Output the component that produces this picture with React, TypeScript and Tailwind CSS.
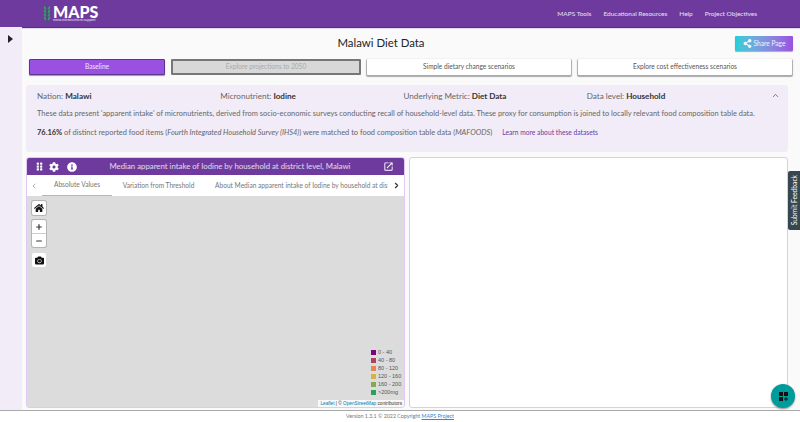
import { ChevronLeft, ChevronRight, ChevronUp, Minus, Plus } from "lucide-react";
import { FaCamera, FaCog, FaGripVertical, FaHome, FaInfoCircle, FaShareAlt } from "react-icons/fa";
import { MdOpenInNew } from "react-icons/md";

const font = "font-['Lato','Noto_Sans',sans-serif]";
const navLinks = ["MAPS Tools", "Educational Resources", "Help", "Project Objectives"];
const legend = [
  { label: "0 - 40", color: "bg-[#800080]" },
  { label: "40 - 80", color: "bg-[#b04060]" },
  { label: "80 - 120", color: "bg-[#e08850]" },
  { label: "120 - 160", color: "bg-[#d8b048]" },
  { label: "160 - 200", color: "bg-[#88a850]" },
  { label: ">200mg", color: "bg-[#28a060]" },
];

const Logo = () => (
  <div className="ml-[43px] flex items-center gap-[2px]">
    <svg width="8" height="18" viewBox="0 0 8 18">
      <path d="M4 0.5v17" stroke="#1f6f48" strokeWidth="0.8" />
      {[3, 6.5, 10, 13.5].map((y) => (
        <g key={y} fill="#3a9a68">
          <ellipse cx="2" cy={y} rx="0.9" ry="1.9" transform={`rotate(-30 2 ${y})`} />
          <ellipse cx="6" cy={y} rx="0.9" ry="1.9" transform={`rotate(30 6 ${y})`} />
        </g>
      ))}
    </svg>
    <div className="flex flex-col items-start">
      <span className="text-[16px] leading-[13px] font-black text-white">MAPS</span>
      <span className="text-[3.5px] leading-[4px] text-white/80">www.micronutrient.support</span>
    </div>
  </div>
);

const MapPanel = () => (
  <div className="relative flex-1 bg-[#dcdcdc]">
    <div className="absolute left-[5px] top-[5px] flex h-[14px] w-[14px] items-center justify-center rounded-[2px] bg-white shadow-[0_0_0_1px_#b5b5b5]">
      <FaHome size={10} color="#111" />
    </div>
    <div className="absolute left-[5px] top-[24px] flex w-[14px] flex-col rounded-[2px] bg-white shadow-[0_0_0_1px_#b5b5b5]">
      <div className="flex h-[14px] items-center justify-center border-b border-[#ccc]">
        <Plus size={8} strokeWidth={3.5} />
      </div>
      <div className="flex h-[13px] items-center justify-center">
        <Minus size={8} strokeWidth={3.5} />
      </div>
    </div>
    <div className="absolute left-[5px] top-[57px] flex h-[14px] w-[14px] items-center justify-center rounded-[2px] bg-white">
      <FaCamera size={9} color="#111" />
    </div>
    <div className="absolute bottom-[12px] right-[4px] flex w-[29px] flex-col gap-[2px] font-['Liberation_Sans',sans-serif] text-[5.5px] leading-[6px] text-[#555]">
      {legend.map((l) => (
        <div key={l.label} className="flex items-center gap-[2px] whitespace-nowrap">
          <span className={`h-[5px] w-[5px] shrink-0 ${l.color}`} />
          {l.label}
        </div>
      ))}
    </div>
    <div className="absolute bottom-0 right-0 bg-white/80 px-[2px] font-['Liberation_Sans',sans-serif] text-[4.7px] leading-[7px] text-[#333]">
      <span className="text-[#0078a8]">Leaflet</span> | © <span className="text-[#0078a8]">OpenStreetMap</span> contributors
    </div>
  </div>
);

const MapCard = () => (
  <div className="flex w-[379px] flex-col overflow-hidden rounded-[3px] border border-[#e0c8f4] bg-white">
    <div className="flex h-[17px] shrink-0 items-center bg-[#6e3a9e] pl-[8px] pr-[10px] text-white">
      <FaGripVertical size={9} />
      <FaCog size={10} className="ml-[5px]" />
      <FaInfoCircle size={10} className="ml-[8px]" />
      <span className="flex-1 whitespace-nowrap text-center text-[7.8px] text-white/80">Median apparent intake of Iodine by household at district level, Malawi</span>
      <MdOpenInNew size={11} />
    </div>
    <div className="flex h-[21px] shrink-0 items-center text-[6.6px] text-[#777]">
      <ChevronLeft size={8} className="ml-[3px] text-[#888]" />
      <div className="ml-[4px] flex h-full w-[70px] items-center justify-center border-b border-[#c8a8e0]">Absolute Values</div>
      <div className="flex h-full w-[93px] items-center justify-center whitespace-nowrap">Variation from Threshold</div>
      <div className="flex h-full w-[183px] items-center overflow-hidden whitespace-nowrap pl-[10px]">About Median apparent intake of Iodine by household at district level, Malawi</div>
      <ChevronRight size={9} strokeWidth={3} className="ml-[4px] text-[#333]" />
    </div>
    <MapPanel />
  </div>
);

export default function App() {
  return (
    <div className={`${font} relative flex h-[422px] w-[800px] flex-col overflow-hidden bg-[#fafafa] text-[#333]`}>
      <header className="flex h-[27px] shrink-0 items-center justify-between bg-[#6e3a9e] pr-[43px] shadow-[0_1px_1px_#5a3085]">
        <Logo />
        <nav className="flex gap-[12px] text-[6.5px] text-white/85">
          {navLinks.map((link) => (
            <span key={link}>{link}</span>
          ))}
        </nav>
      </header>

      <div className="flex min-h-0 flex-1">
        <aside className="w-[22px] shrink-0 bg-[#f1ecf8] pl-[8px] pt-[8px]">
          <div className="h-0 w-0 border-y-[4px] border-l-[5px] border-y-transparent border-l-[#222]" />
        </aside>

        <main className="flex w-[778px] flex-col pl-[4px]">
          <div className="relative flex h-[32px] shrink-0 items-center justify-center pr-[64px]">
            <h1 className="text-[11.4px] text-[#222]">Malawi Diet Data</h1>
            <button className="absolute right-[7px] top-[9px] flex h-[15px] w-[58px] items-center justify-center gap-[2px] rounded-[1px] bg-gradient-to-r from-[#12d0d8] to-[#9a50e0] text-[6.6px] text-white/90 shadow-[0_1px_1px_#aaa]">
              <FaShareAlt size={9} />
              Share Page
            </button>
          </div>

          <div className="flex h-[16px] shrink-0 gap-[6px] pl-[3px] text-[6.6px]">
            <div className="flex w-[136px] items-center justify-center rounded-[1px] border border-[#5c3490] bg-[#9a50e0] text-white/85 shadow-[0_1px_1px_#999]">Baseline</div>
            <div className="flex w-[190px] items-center justify-center rounded-[1px] border-2 border-[#777] bg-[#d8d8d8] text-[#aaa]">Explore projections to 2050</div>
            <div className="flex w-[204px] items-center justify-center rounded-[1px] bg-white text-[#555] shadow-[0_1px_1px_1px_#aaa]">Simple dietary change scenarios</div>
            <div className="ml-[1px] flex w-[214px] items-center justify-center rounded-[1px] bg-white text-[#555] shadow-[0_1px_1px_1px_#aaa]">Explore cost effectiveness scenarios</div>
          </div>

          <section className="relative mt-[10px] h-[67px] w-[762px] shrink-0 rounded-[3px] bg-[#f1ecf8] pl-[11px] pt-[6px] text-[7.45px] leading-[10px] text-[#666]">
            <div className="grid w-[733px] grid-cols-4 text-[8.1px] leading-[11px]">
              <span>Nation: <b className="text-[#333]">Malawi</b></span>
              <span>Micronutrient: <b className="text-[#333]">Iodine</b></span>
              <span>Underlying Metric: <b className="text-[#333]">Diet Data</b></span>
              <span>Data level: <b className="text-[#333]">Household</b></span>
            </div>
            <p className="mt-[7px] whitespace-nowrap">These data present 'apparent intake' of micronutrients, derived from socio-economic surveys conducting recall of household-level data. These proxy for consumption is joined to locally relevant food composition table data.</p>
            <p className="mt-[8px] whitespace-nowrap">
              <b className="text-[#333]">76.16%</b> of distinct reported food items (<i>Fourth Integrated Household Survey (IHS4)</i>) were matched to food composition table data (<i>MAFOODS</i>)
              <span className="ml-[10px] text-[6.7px] text-[#6e3a9e]">Learn more about these datasets</span>
            </p>
            <ChevronUp size={9} strokeWidth={2} className="absolute right-[8px] top-[6px] text-[#555]" />
          </section>

          <div className="mt-[5px] flex min-h-0 w-[762px] flex-1 gap-[4px] pb-[2px]">
            <MapCard />
            <div className="w-[379px] rounded-[3px] border border-[#e0c8f4] bg-white" />
          </div>
        </main>
      </div>

      <footer className="flex h-[12px] shrink-0 items-center justify-center border-t border-[#aaa] bg-white text-[5.3px] text-[#777]">
        Version 1.3.1 © 2022 Copyright&nbsp;<span className="text-[#3b82d0] underline">MAPS Project</span>
      </footer>

      <div className="absolute right-0 top-[171px] flex h-[59px] w-[12px] items-center justify-center rounded-l-[2px] bg-[#37474f]">
        <span className="rotate-180 whitespace-nowrap text-[6.7px] text-white [writing-mode:vertical-rl]">Submit Feedback</span>
      </div>
      <div className="absolute left-[771px] top-[384px] flex h-[24px] w-[24px] items-center justify-center rounded-full bg-[#009c9c] shadow-[0_1px_2px_#888]">
        <svg width="9" height="9" viewBox="0 0 9 9" fill="#111">
          <rect x="0" y="0" width="4" height="4" />
          <rect x="5" y="0" width="4" height="4" />
          <rect x="0" y="5" width="4" height="4" />
          <path d="M6.5 5h1v1.5H9v1H7.5V9h-1V7.5H5v-1h1.5z" />
        </svg>
      </div>
    </div>
  );
}
